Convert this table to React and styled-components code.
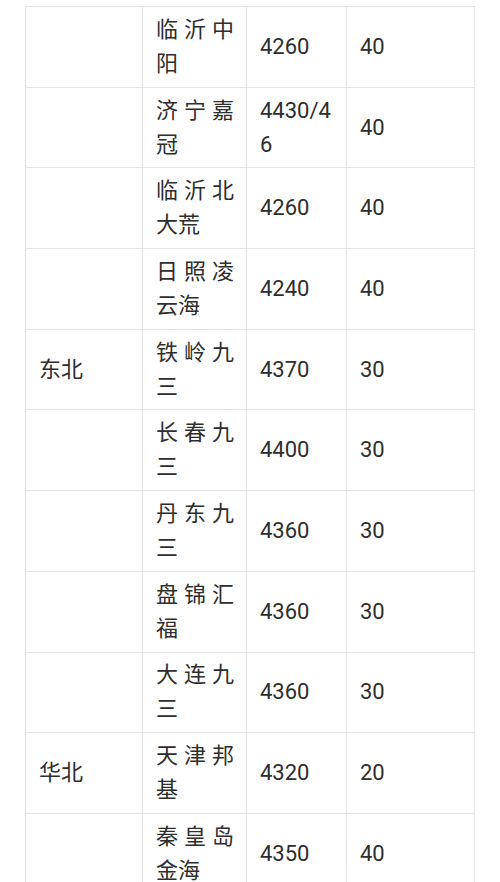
import React from "react";
import styled, { createGlobalStyle } from "styled-components";

const Global = createGlobalStyle`
  html, body { margin: 0; padding: 0; background: #ffffff; }
  body { font-family: Roboto, "Noto Sans CJK SC", sans-serif; color: #2e2e2e; }
`;

const Page = styled.div`
  padding: 6px 0 0 25px;
`;

const Table = styled.table`
  width: 449px;
  table-layout: fixed;
  border-collapse: collapse;
  font-size: 22px;
  line-height: 34px;
`;

const Col = styled.col`
  width: ${(p) => p.$w}px;
`;

const Cell = styled.td`
  border: 1px solid #e3e3e3;
  padding: 5.85px 12px 5.85px 13px;
  height: 68px;
  vertical-align: middle;
  word-break: break-all;
  text-align: ${(p) => (p.$justify ? "justify" : "left")};
  text-justify: inter-character;
`;

const widths = [117, 104, 100, 128];

const rows = [
  ["", "临沂中阳", "4260", "40"],
  ["", "济宁嘉冠", "4430/46", "40"],
  ["", "临沂北大荒", "4260", "40"],
  ["", "日照凌云海", "4240", "40"],
  ["东北", "铁岭九三", "4370", "30"],
  ["", "长春九三", "4400", "30"],
  ["", "丹东九三", "4360", "30"],
  ["", "盘锦汇福", "4360", "30"],
  ["", "大连九三", "4360", "30"],
  ["华北", "天津邦基", "4320", "20"],
  ["", "秦皇岛金海", "4350", "40"],
];

export default function App() {
  return (
    <Page>
      <Global />
      <Table>
        <colgroup>
          {widths.map((w, i) => (
            <Col key={i} $w={w} />
          ))}
        </colgroup>
        <tbody>
          {rows.map((r, i) => (
            <tr key={i}>
              <Cell>{r[0]}</Cell>
              <Cell $justify>{r[1]}</Cell>
              <Cell>{r[2]}</Cell>
              <Cell>{r[3]}</Cell>
            </tr>
          ))}
        </tbody>
      </Table>
    </Page>
  );
}
